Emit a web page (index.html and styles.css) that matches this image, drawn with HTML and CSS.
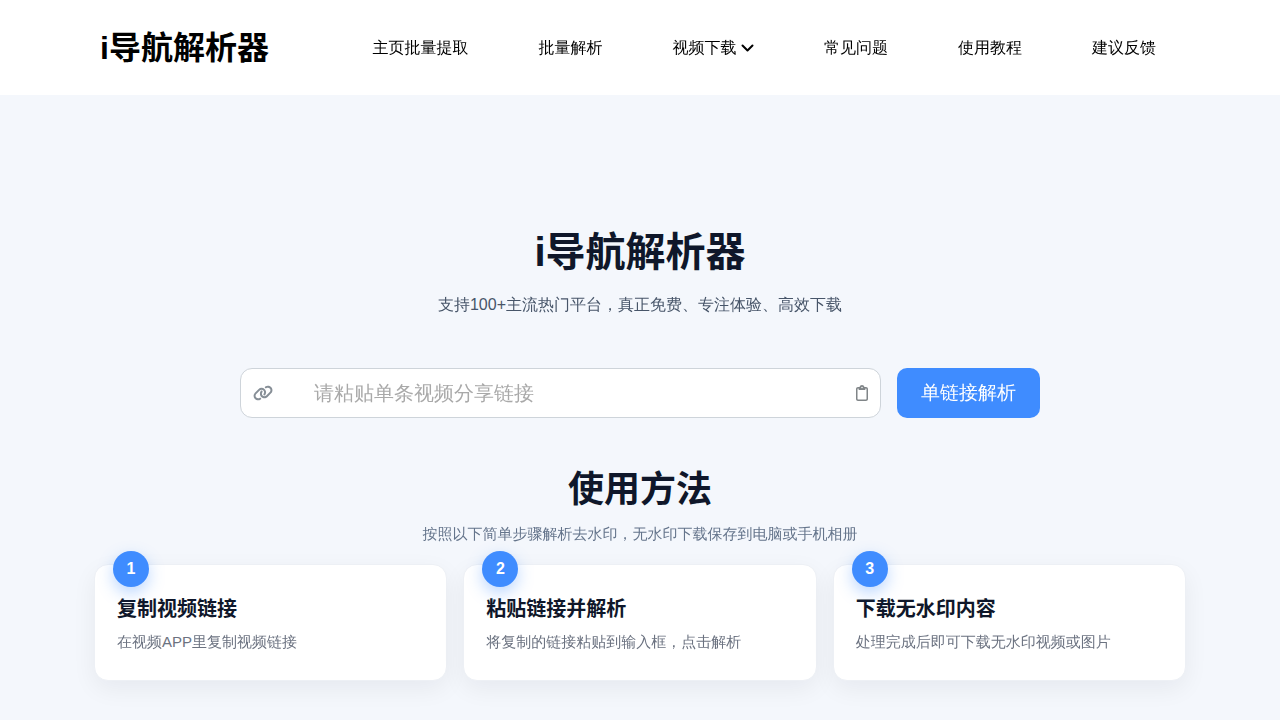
FILE: index.html
```html
<!DOCTYPE html>
<html lang="zh-CN">
  <head>
    <meta charset="UTF-8" />
    <meta name="viewport" content="width=device-width, initial-scale=1.0" />
    <title>i导航解析器</title>
    <link rel="stylesheet" href="styles.css">
  </head>
  <body>
    <header class="site-header">
      <div class="header-inner">
        <a class="logo" href="#">i导航解析器</a>
        <nav class="nav">
          <a href="#">主页批量提取</a>
          <a href="#">批量解析</a>
          <a href="#">视频下载
            <svg class="chevron" viewBox="0 0 13 16" aria-hidden="true"><path d="M1.5 5.5l5 5 5-5" /></svg></a>
          <a href="#">常见问题</a>
          <a href="#">使用教程</a>
          <a href="#">建议反馈</a>
        </nav>
      </div>
    </header>

    <main>
      <section class="hero">
        <h1>i导航解析器</h1>
        <p class="hero-text">支持100+主流热门平台，真正免费、专注体验、高效下载</p>
        <form class="parse-form">
          <div class="url-box">
            <label for="url" aria-label="视频分享链接">
              <svg class="icon-link" viewBox="0 0 640 512" aria-hidden="true"><path d="M579.8 267.7c56.5-56.5 56.5-148 0-204.5c-50-50-128.8-56.5-186.3-15.4l-1.6 1.1c-14.4 10.3-17.7 30.3-7.4 44.6s30.3 17.7 44.6 7.4l1.6-1.1c32.1-22.9 76-19.3 103.8 8.6c31.5 31.5 31.5 82.5 0 114L422.3 334.8c-31.5 31.5-82.5 31.5-114 0c-27.9-27.9-31.5-71.8-8.6-103.8l1.1-1.6c10.3-14.4 6.9-34.4-7.4-44.6s-34.4-6.9-44.6 7.4l-1.1 1.6C206.5 251.2 213 330 263 380c56.5 56.5 148 56.5 204.5 0L579.8 267.7zM60.2 244.3c-56.5 56.5-56.5 148 0 204.5c50 50 128.8 56.5 186.3 15.4l1.6-1.1c14.4-10.3 17.7-30.3 7.4-44.6s-30.3-17.7-44.6-7.4l-1.6 1.1c-32.1 22.9-76 19.3-103.8-8.6C74 372 74 321 105.5 289.5L217.7 177.2c31.5-31.5 82.5-31.5 114 0c27.9 27.9 31.5 71.8 8.6 103.9l-1.1 1.6c-10.3 14.4-6.9 34.4 7.4 44.6s34.4 6.9 44.6-7.4l1.1-1.6C433.5 260.8 427 182 377 132c-56.5-56.5-148-56.5-204.5 0L60.2 244.3z" /></svg>
            </label>
            <input id="url" type="text" placeholder="请粘贴单条视频分享链接" />
            <button class="paste" type="button" aria-label="粘贴">
              <svg class="icon-clipboard" viewBox="0 0 384 512" aria-hidden="true"><path d="M280 64h40c35.3 0 64 28.7 64 64V448c0 35.3-28.7 64-64 64H64c-35.3 0-64-28.7-64-64V128C0 92.7 28.7 64 64 64h40 9.6C121 27.5 153.3 0 192 0s71 27.5 78.4 64H280zM64 112c-8.8 0-16 7.2-16 16V448c0 8.8 7.2 16 16 16H320c8.8 0 16-7.2 16-16V128c0-8.8-7.2-16-16-16H304v24c0 13.3-10.7 24-24 24H192 104c-13.3 0-24-10.7-24-24V112H64zm128-8a24 24 0 1 0 0-48 24 24 0 1 0 0 48z" /></svg>
            </button>
          </div>
          <button class="submit" type="submit">单链接解析</button>
        </form>
      </section>

      <section class="steps">
        <h2>使用方法</h2>
        <p class="steps-text">按照以下简单步骤解析去水印，无水印下载保存到电脑或手机相册</p>
        <div class="cards">
          <div class="card">
            <span class="badge">1</span>
            <h3>复制视频链接</h3>
            <p>在视频APP里复制视频链接</p>
          </div>
          <div class="card">
            <span class="badge">2</span>
            <h3>粘贴链接并解析</h3>
            <p>将复制的链接粘贴到输入框，点击解析</p>
          </div>
          <div class="card">
            <span class="badge">3</span>
            <h3>下载无水印内容</h3>
            <p>处理完成后即可下载无水印视频或图片</p>
          </div>
        </div>
      </section>
    </main>
  </body>
</html>
```
FILE: styles.css
```css
* {
  box-sizing: border-box;
}

body {
  margin: 0;
  font-family: 'Liberation Sans', 'WenQuanYi Zen Hei', 'Noto Sans CJK SC', sans-serif;
  font-size: 16px;
  line-height: 24px;
  background-color: #f4f7fc;
  color: #0f172a;
}

h1,
h2,
h3,
p {
  margin: 0;
}

h1,
h2,
h3,
.logo {
  font-family: 'Liberation Sans', 'Noto Sans CJK SC', sans-serif;
  font-weight: bold;
}

a {
  color: #000;
  text-decoration: none;
}

button,
input {
  font-family: inherit;
}

.site-header {
  background-color: #fff;
}

.header-inner {
  display: flex;
  align-items: center;
  justify-content: space-between;
  max-width: 1080px;
  margin: 0 auto;
  padding: 24px 24px 23px 0;
}

.logo {
  font-size: 32px;
  line-height: 48px;
}

.nav {
  display: flex;
  gap: 70px;
}

.chevron {
  width: 13px;
  height: 16px;
  vertical-align: -3px;
  fill: none;
  stroke: #000;
  stroke-width: 2;
  stroke-linecap: round;
  stroke-linejoin: round;
}

.hero {
  max-width: 800px;
  margin: 0 auto;
  padding-top: 133px;
  text-align: center;
}

h1 {
  font-size: 40px;
  line-height: 48px;
}

.hero-text {
  margin-top: 17px;
  color: #475569;
}

.parse-form {
  display: flex;
  gap: 16px;
  margin-top: 51px;
}

.url-box {
  display: flex;
  flex: 1;
  align-items: center;
  height: 50px;
  padding: 0 12px;
  border: 1px solid #ced4da;
  border-radius: 12px;
  background-color: #fff;
}

.url-box label,
.paste {
  display: flex;
}

.url-box input {
  flex: 1;
  min-width: 0;
  height: 100%;
  margin-left: 41px;
  padding: 0;
  border: none;
  outline: none;
  background: none;
  font-size: 20px;
}

.url-box input::placeholder {
  color: #a9a9a9;
}

.paste {
  padding: 0;
  border: none;
  background: none;
  cursor: pointer;
}

.icon-link {
  width: 20px;
  height: 16px;
  fill: #868e96;
}

.icon-clipboard {
  width: 12px;
  height: 16px;
  fill: #808588;
}

.submit {
  height: 50px;
  padding: 0 24px;
  border: none;
  border-radius: 10px;
  background-color: #3f8cff;
  color: #fff;
  font-size: 19px;
  cursor: pointer;
}

.steps {
  max-width: 1140px;
  margin: 0 auto;
  padding: 50px 24px 40px;
  text-align: center;
}

h2 {
  font-size: 36px;
  line-height: 44px;
}

.steps-text {
  margin-top: 10px;
  font-size: 15px;
  color: #64748b;
}

.cards {
  display: grid;
  grid-template-columns: repeat(3, 1fr);
  gap: 16px;
  margin-top: 18px;
  text-align: left;
}

.card {
  position: relative;
  padding: 30px 22px 26px;
  border: 1px solid #edf0f5;
  border-radius: 14px;
  background-color: #fff;
  box-shadow: 0 8px 24px rgba(15, 23, 42, 0.06);
}

.card h3 {
  font-size: 20px;
  line-height: 28px;
}

.card p {
  margin-top: 7px;
  font-size: 15px;
  color: #6b7280;
}

.badge {
  position: absolute;
  top: -14px;
  left: 18px;
  width: 36px;
  height: 36px;
  border-radius: 50%;
  background-color: #3f8cff;
  box-shadow: 0 6px 16px rgba(63, 140, 255, 0.35);
  color: #fff;
  font-weight: bold;
  line-height: 36px;
  text-align: center;
}
```
